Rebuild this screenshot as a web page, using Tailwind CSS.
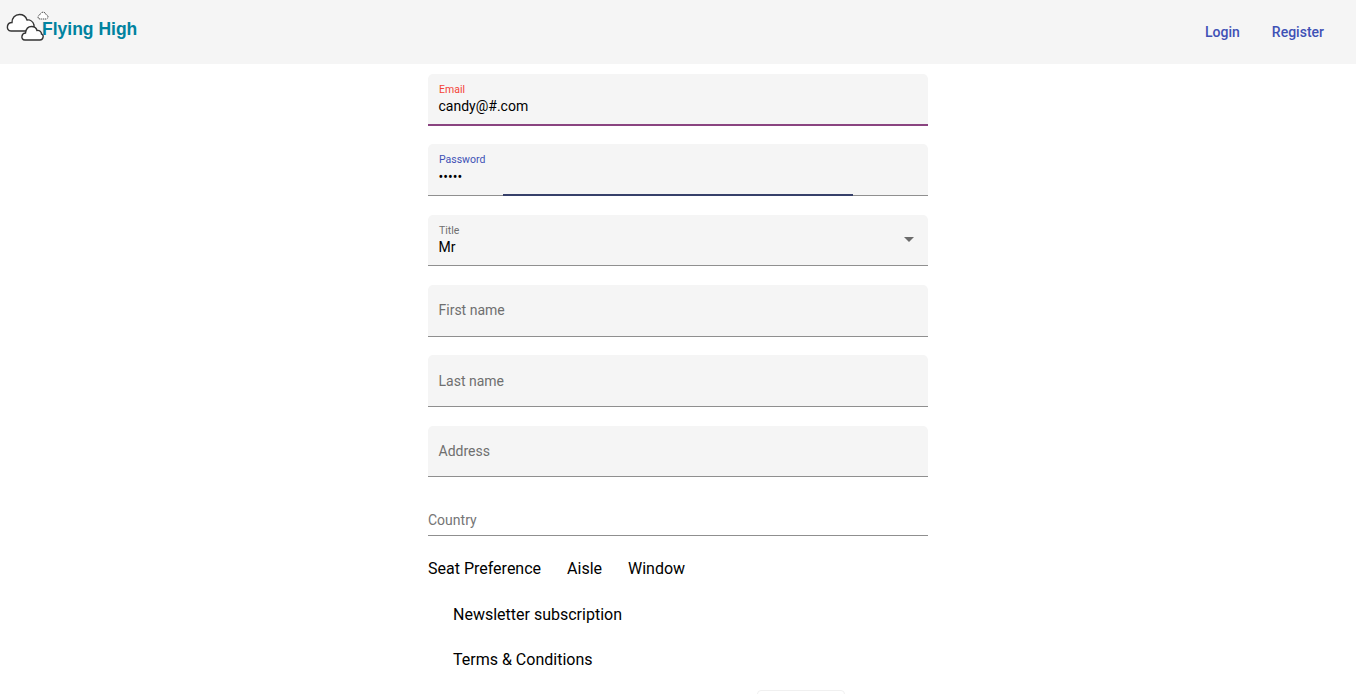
<!DOCTYPE html>
<html lang="en">
<head>
    <meta charset="UTF-8">
    <title>Flying High</title>
    <script src="https://cdn.jsdelivr.net/npm/@tailwindcss/browser@4"></script>
</head>
<body class="bg-white h-[694px] overflow-hidden font-['Roboto',sans-serif]">
    <div class="w-[1356px]">
        <!-- Toolbar -->
        <header class="h-16 bg-[#f5f5f5] flex justify-between">
            <div class="flex pl-[7px] pt-[12px] h-fit">
                <svg width="35" height="30" viewBox="0 0 35 30" fill="#fff" stroke="#333" stroke-width="1.400" class="shrink-0 overflow-visible">
                    <path d="M4 19C1 19 0 16.500 .5 14 1 11.500 3 10.500 5 10.500 5 6 8 2.500 12.500 2.500 16.500 2.500 19 5 20 8 23 7.500 26 9.500 27 13V19z"/>
                    <path d="M18 28C15.500 28 14.500 26 15 24 15.500 22 17 21 18.500 21 19 17 21.500 14.500 24.500 14.500 27.500 14.500 29.500 16.500 30 18.500 32.500 18 34.500 20 34.500 22 36 22.500 36.500 24 36 25.500 35.500 27.500 34 28 33 28z"/>
                    <path d="M33 7c-1.500 0-2-1-2-2 0-1 .8-1.600 1.500-1.600C33 1.500 34.500.2 36 .2s2.700 1 3 2.500c1.200 0 2 1 2 2.200S40 7 39 7z" stroke-width=".9" stroke-dasharray="1.200 .7"/>
                </svg>
                <span class="font-['Liberation_Sans',sans-serif] font-bold text-[17.500px] leading-[20px] text-[#00829f] mt-[7px]">Flying High</span>
            </div>
            <nav class="flex items-start text-[14px] font-medium text-[#3f51b5] leading-9 pt-[14px] pr-[32px] gap-[32px]">
                <a href="#">Login</a>
                <a href="#">Register</a>
            </nav>
        </header>

        <!-- Form -->
        <form class="w-[500px] mx-auto pt-[10px] flex flex-col">
            <div class="relative h-[52px] mb-[18px] bg-[#f5f5f5] rounded-t-[5px] px-[10.500px] pt-[10px] border-b-2 border-[#8a4480]">
                <div class="pl-[.5px] text-[10.500px] leading-[12px] text-[#f44336]">Email</div>
                <div class="text-[14px] leading-[18px] mt-[1px] text-black">candy@#.com</div>
            </div>
            <div class="relative h-[52px] mb-[19px] bg-[#f5f5f5] rounded-t-[5px] px-[10.500px] pt-[10px] border-b border-[#8f8f8f]">
                <div class="pl-[.5px] text-[10.500px] leading-[12px] text-[#3f51b5]">Password</div>
                <div class="text-[14px] leading-[18px] mt-[2px] text-black">•••••</div>
                <div class="absolute left-[75px] w-[350px] -bottom-[1px] h-[2px] bg-[#36406a]"></div>
            </div>
            <div class="relative h-[51px] mb-[19px] bg-[#f5f5f5] rounded-t-[5px] px-[10.500px] pt-[10px] border-b border-[#8f8f8f]">
                <div class="pl-[.5px] text-[10.500px] leading-[12px] text-[#6f6f6f]">Title</div>
                <div class="text-[14px] leading-[18px] mt-[1px] text-black">Mr</div>
                <div class="absolute right-[14px] top-[22px] w-0 h-0 border-x-[5px] border-x-transparent border-t-[5px] border-t-[#6b6b6b]"></div>
            </div>
            <div class="h-[52px] mb-[18px] pb-[1px] bg-[#f5f5f5] rounded-t-[5px] px-[10.500px] border-b border-[#8f8f8f] flex items-center text-[14px] text-[#6f6f6f]">First name</div>
            <div class="h-[52px] mb-[19px] pt-[1px] bg-[#f5f5f5] rounded-t-[5px] px-[10.500px] border-b border-[#8f8f8f] flex items-center text-[14px] text-[#6f6f6f]">Last name</div>
            <div class="h-[51px] bg-[#f5f5f5] rounded-t-[5px] px-[10.500px] border-b border-[#8f8f8f] flex items-center text-[14px] text-[#6f6f6f]">Address</div>

            <div class="mt-[33px] h-[26px] border-b border-[#8f8f8f] text-[14px] leading-[20px] text-[#757575]">Country</div>

            <div class="flex mt-[21px] text-[16px] leading-[24px] text-black gap-[26px]">
                <span>Seat Preference</span>
                <span>Aisle</span>
                <span>Window</span>
            </div>
            <div class="mt-[22px] pl-[25px] text-[16px] leading-[24px] text-black">Newsletter subscription</div>
            <div class="mt-[21px] pl-[25px] text-[16px] leading-[24px] text-black">Terms &amp; Conditions</div>
        </form>
    </div>
    <!-- Submit button, cut off by the fold -->
    <div class="fixed left-[757px] top-[690px] w-[88px] h-9 rounded bg-white border border-[#f0f0f0]"></div>
</body>
</html>
